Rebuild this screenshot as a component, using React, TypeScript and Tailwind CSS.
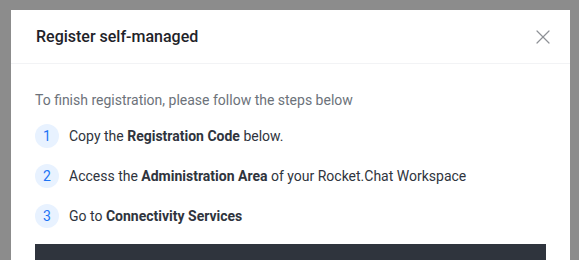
import { X } from "lucide-react";

const steps = [
  { n: 1, pre: "Copy the ", bold: "Registration Code", post: " below." },
  { n: 2, pre: "Access the ", bold: "Administration Area", post: " of your Rocket.Chat Workspace" },
  { n: 3, pre: "Go to ", bold: "Connectivity Services", post: "" },
];

export default function App() {
  return (
    <div className="h-[260px] overflow-hidden bg-[#8c8c8c] pt-[10px] pl-[11px] font-['Roboto',sans-serif]">
      <div className="w-[559px] h-[300px] bg-white">
        <div className="flex h-[54px] items-center justify-between border-b border-[#f2f3f5] px-[25px]">
          <h2 className="mt-[1px] text-[16px] font-medium text-[#1f2329]">Register self-managed</h2>
          <X size={24} strokeWidth={1.2} className="mr-[-10px] mt-[1px] text-[#8e9196]" />
        </div>
        <div className="px-6 pt-[26px]">
          <p className="text-[14px] text-[#6c727a]">To finish registration, please follow the steps below</p>
          <ol className="mt-[13px] flex flex-col gap-4">
            {steps.map((s) => (
              <li key={s.n} className="flex items-center gap-[10px] text-[14px] text-[#2f343d]">
                <span className="flex h-6 w-6 items-center justify-center rounded-full bg-[#e8f2ff] text-[14px] text-[#1d74f5]">
                  {s.n}
                </span>
                <span>
                  {s.pre}
                  <b className="font-bold">{s.bold}</b>
                  {s.post}
                </span>
              </li>
            ))}
          </ol>
          <div className="mt-4 h-[60px] bg-[#2f343d]" />
        </div>
      </div>
    </div>
  );
}
